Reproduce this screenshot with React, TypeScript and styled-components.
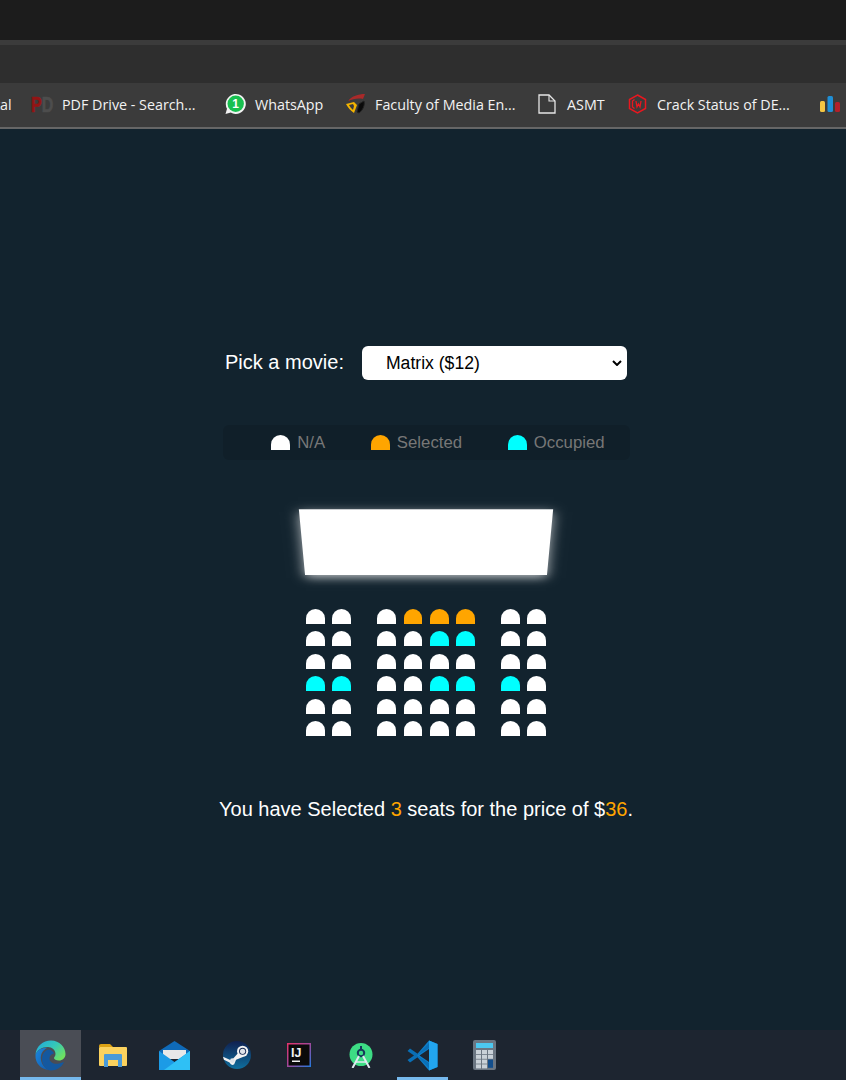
import React from "react";
import styled, { createGlobalStyle } from "styled-components";

const Global = createGlobalStyle`
  html, body { margin: 0; padding: 0; background: #12232e; }
  * { box-sizing: border-box; }
`;

const Page = styled.div`
  width: 846px;
  height: 1080px;
  display: flex;
  flex-direction: column;
  overflow: hidden;
  background: #12232e;
  font-family: "Liberation Sans", Arial, sans-serif;
  color: #fff;
`;

const TitleBar = styled.div`
  height: 40px;
  background: #1c1c1c;
`;

const TabEdge = styled.div`
  height: 5px;
  background: #3b3b3b;
`;

const AddressBar = styled.div`
  height: 38px;
  background: #2e2e2e;
`;

const BookmarkBar = styled.div`
  height: 46px;
  display: flex;
  align-items: center;
  padding-bottom: 2px;
  overflow: hidden;
  background: #3b3b3b;
  border-bottom: 2px solid #666;
  font-family: "Open Sans", sans-serif;
  font-size: 14.3px;
  color: #f2f2f2;
`;

const Bookmark = styled.div<{ $width: number }>`
  flex: none;
  width: ${(p) => p.$width}px;
  display: flex;
  align-items: center;
  white-space: nowrap;
`;

const CutOffLabel = styled.span`
  margin-left: -5px;
`;

const IconSlot = styled.span<{ $width: number }>`
  flex: none;
  width: ${(p) => p.$width}px;
  display: flex;
  align-items: center;
`;

const Main = styled.main`
  flex: 1;
  display: flex;
  flex-direction: column;
  align-items: center;
  justify-content: center;
  padding: 8px 0 0 6px;
  font-size: 20px;
`;

const MoviePicker = styled.div`
  display: flex;
  align-items: center;
  gap: 18px;
`;

const MovieLabel = styled.label`
  padding-bottom: 2px;
  font-size: 20px;
`;

const chevron =
  "data:image/svg+xml," +
  encodeURIComponent(
    '<svg xmlns="http://www.w3.org/2000/svg" width="10" height="6" viewBox="0 0 10 6"><path d="M1 1l4 4 4-4" fill="none" stroke="#000" stroke-width="2"/></svg>'
  );

const MovieSelect = styled.select`
  appearance: none;
  width: 265px;
  height: 34px;
  border: 0;
  border-radius: 6px;
  padding-left: 24px;
  background: #fff url("${chevron}") no-repeat right 5px center;
  color: #000;
  font-family: "Liberation Sans", Arial, sans-serif;
  font-size: 17.6px;
`;

const Legend = styled.ul`
  width: 407px;
  height: 35px;
  margin: 45px 0 0;
  padding: 0 0 0 24px;
  list-style: none;
  display: flex;
  align-items: center;
  justify-content: center;
  gap: 46px;
  border-radius: 6px;
  background: rgba(0, 0, 0, 0.1);
  color: #777;
  font-size: 16.75px;
`;

const LegendItem = styled.li`
  display: flex;
  align-items: center;
  gap: 7px;
`;

const Seat = styled.div<{ $status: string }>`
  width: 18.75px;
  height: 15px;
  border-radius: 12.5px 12.5px 0 0;
  background: ${(p) =>
    p.$status === "s" ? "#ffa500" : p.$status === "o" ? "#00ffff" : "#fff"};
`;

const Hall = styled.div`
  width: 247.5px;
  margin-top: 20px;
  perspective: 1250px;
`;

const Screen = styled.div`
  width: 100%;
  height: 87.5px;
  margin: 18.75px 0;
  background: #fff;
  transform: rotateX(-45deg);
  box-shadow: 0 3.75px 12.5px rgba(255, 255, 255, 0.7);
`;

const SeatRow = styled.div`
  display: flex;
  & > div {
    margin: 3.75px;
  }
  & > div:nth-of-type(2) {
    margin-right: 22.5px;
  }
  & > div:nth-last-of-type(2) {
    margin-left: 22.5px;
  }
`;

const Summary = styled.p`
  margin: 58px 0 0;
  font-size: 20px;
  line-height: 23px;
`;

const Amount = styled.span`
  color: #ffa500;
`;

const Taskbar = styled.div`
  height: 50px;
  display: flex;
  padding-left: 20px;
  background: #1d2530;
`;

const TaskCell = styled.div<{ $active?: boolean; $open?: boolean }>`
  position: relative;
  width: 61px;
  margin-right: 1px;
  display: flex;
  align-items: center;
  justify-content: center;
  background: ${(p) => (p.$active ? "#4a4d55" : "transparent")};
  &::after {
    content: "";
    display: ${(p) => (p.$active || p.$open ? "block" : "none")};
    position: absolute;
    left: ${(p) => (p.$active ? 0 : 5)}px;
    right: ${(p) => (p.$active ? 0 : 5)}px;
    bottom: 0;
    height: 3px;
    background: #76b9ed;
  }
`;

const IconText = styled.text`
  font-family: "Liberation Sans", Arial, sans-serif;
  font-weight: 700;
`;

const PdfIcon = () => (
  <svg width="22" height="20" viewBox="0 0 22 20" overflow="visible">
    <IconText x="0" y="12.600" fontSize="16" fill="#931414" stroke="#931414" strokeWidth="0.5" transform="scale(1 1.4)">P</IconText>
    <IconText x="10.700" y="12.600" fontSize="16" fill="#4d4d4d" stroke="#4d4d4d" strokeWidth="0.5" transform="scale(1 1.4)">D</IconText>
  </svg>
);

const WhatsAppIcon = () => (
  <svg width="21" height="22" viewBox="0.5 0 21 22">
    <path d="M1 21l1.500-5.300A10 10 0 1 1 6.300 19.600z" fill="#f2f2f2" />
    <circle cx="11.200" cy="10.800" r="8.200" fill="#17c04f" />
    <IconText x="11.200" y="15" fontSize="12" fill="#fff" textAnchor="middle">1</IconText>
  </svg>
);

const FacultyIcon = () => (
  <svg width="21" height="22" viewBox="0 0 21 22">
    <path d="M3 8C7 3 13 1 20 1l-2 5C13 5 8 6 3 8z" fill="#a82a2a" />
    <path d="M1 11l8-2 3 3-3 8C6 18 3 15 1 11zm3 1c1 2 3 4 4 5l1-4-1-2z" fill="#f4b400" />
    <path d="M12 19l2-8 5-3c1 4-1 9-5 12z" fill="#0a0a0a" stroke="#222" />
  </svg>
);

const DocIcon = () => (
  <svg width="18" height="20" viewBox="0 0 18 20" fill="none">
    <path d="M1 1h10l6 6v12H1z" stroke="#e6e6e6" strokeWidth="1.300" />
    <path d="M11 1v6h6" stroke="#e6e6e6" strokeWidth="1.100" />
  </svg>
);

const CrackIcon = () => (
  <svg width="19" height="20" viewBox="0 0 19 20" fill="none">
    <path d="M9.500 1l8 4.500v9l-8 4.500-8-4.500v-9z" stroke="#e8171f" strokeWidth="1.500" />
    <path d="M6.500 5.500L4.500 7v6l2 1.500M8 7l1 6 1.500-3 1.500 3 1-6" stroke="#e8171f" strokeWidth="1.300" />
  </svg>
);

const BarsIcon = () => (
  <svg width="20" height="16" viewBox="0 0 20 16">
    <rect x="0" y="5" width="5" height="11" rx="1.500" fill="#f4c542" />
    <rect x="7.500" y="0" width="5.500" height="16" rx="1.500" fill="#1f8fd6" />
    <rect x="15" y="6" width="5" height="10" rx="1.500" fill="#b3202a" />
  </svg>
);

const EdgeIcon = () => (
  <svg width="31" height="31" viewBox="0 0 31 31">
    <defs>
      <linearGradient id="edgeTop" x1="0" y1="0" x2="1" y2="0.7">
        <stop offset="0" stopColor="#1fa6e0" />
        <stop offset="0.55" stopColor="#35c8b8" />
        <stop offset="1" stopColor="#6fe05f" />
      </linearGradient>
      <linearGradient id="edgeLow" x1="0" y1="0" x2="1" y2="1">
        <stop offset="0" stopColor="#1c86dc" />
        <stop offset="1" stopColor="#0f5cb0" />
      </linearGradient>
    </defs>
    <path d="M0.500 15C1 6 8 0.500 16 0.500 24.500 0.500 30.500 7 30.500 14c0 4-3 6.500-6.500 6.500-3 0-5-1-5-2.500 0-1 1.500-1.500 1.500-4C20.500 10 17 7 13 7 6.500 7 2 10 0.500 15z" fill="url(#edgeTop)" />
    <path d="M0.500 15C2 10 6.500 7.500 12 8c-4 2-7 6-6 12 .6 4 3.500 8 8 10C6 29.500 0 23 0.500 15z" fill="url(#edgeLow)" />
    <path d="M7 19c0-5 3-8.500 6-9.500 3 0 5.500 2 6 4-2 .5-4.500 2-4.500 5 0 4 4.500 6 9.500 5l5-1.500C26.500 27.500 21.500 30.500 16 30.500 11 30.500 7 25 7 19z" fill="#14589f" />
  </svg>
);

const FolderIcon = () => (
  <svg width="28" height="23" viewBox="0 0 28 23">
    <path d="M0 2q0-2 2-2h9l3 3H0z" fill="#dca214" />
    <rect x="0" y="3" width="28" height="19" rx="1" fill="#fbd25e" />
    <path d="M5 23V11q0-1 1-1h16q1 0 1 1v12h-4v-7H9v7H5z" fill="#4a9ad8" />
  </svg>
);

const MailIcon = () => (
  <svg width="31" height="29" viewBox="0 0 31 29">
    <path d="M0 10L15.500 0 31 10v3H0z" fill="#0f6ab8" />
    <path d="M4 9h23v9H4z" fill="#e8e8e8" />
    <path d="M0 10l15.500 11L31 10v19H0z" fill="#1c9be6" />
    <path d="M31 10v19H5z" fill="#2fc0f5" />
  </svg>
);

const SteamIcon = () => (
  <svg width="28" height="28" viewBox="0 0 30 30">
    <defs>
      <linearGradient id="steamBg" x1="0" y1="0" x2="0" y2="1">
        <stop offset="0" stopColor="#10204f" />
        <stop offset="1" stopColor="#0f6f9e" />
      </linearGradient>
    </defs>
    <circle cx="15" cy="15" r="15" fill="url(#steamBg)" />
    <path d="M0 17l9 4 8-9 5-3v8l-8 3-2 5q-3 2-5-2L1 20z" fill="#f2f2f2" />
    <circle cx="21" cy="11" r="6" fill="#f2f2f2" />
    <circle cx="21" cy="11" r="3.800" fill="#14264f" />
    <circle cx="21" cy="11" r="2.800" fill="#dfe3e8" />
    <circle cx="10" cy="21" r="2.500" fill="#dfe3e8" />
  </svg>
);

const IdeaIcon = () => (
  <svg width="24" height="24" viewBox="0 0 24 24">
    <defs>
      <linearGradient id="ideaFrame" x1="0" y1="0" x2="1" y2="1">
        <stop offset="0" stopColor="#e8336b" />
        <stop offset="0.5" stopColor="#a0489a" />
        <stop offset="1" stopColor="#1f7be0" />
      </linearGradient>
    </defs>
    <rect width="24" height="24" fill="url(#ideaFrame)" />
    <rect x="1.500" y="1.500" width="21" height="21" fill="#0b0b0b" />
    <IconText x="4" y="13.500" fontSize="12.500" fill="#f2f2f2">IJ</IconText>
    <rect x="5" y="17.500" width="8" height="1.500" fill="#f2f2f2" />
  </svg>
);

const AndroidStudioIcon = () => (
  <svg width="24" height="25" viewBox="0 0 24 25" fill="none">
    <circle cx="12" cy="11.500" r="11.500" fill="#3ddc84" />
    <circle cx="12" cy="10" r="3.200" stroke="#16395a" strokeWidth="2" />
    <path d="M12 3v4" stroke="#16395a" strokeWidth="2" />
    <path d="M10 13L3.500 25M14 13l6.500 12" stroke="#dfe8ef" strokeWidth="2" />
    <path d="M6 19h12" stroke="#dfe8ef" strokeWidth="1.500" />
  </svg>
);

const VSCodeIcon = () => (
  <svg width="31" height="31" viewBox="0 0 31 31">
    <path d="M22 0.500L9 15.500l13 15 8.500-3.500V4z" fill="#0e7fcb" />
    <path d="M22 0.500L30.500 4v23L22 30.500z" fill="#22a5ef" />
    <path d="M22 9v13L12.500 15.500z" fill="#1d2530" />
    <path d="M3 8.500L0.500 11 7 15.500 0.500 20 3 22.500l8-5.500 11 11v-5L10 15.500 22 8V3L11 14z" fill="#0a6fb6" />
  </svg>
);

const CalcIcon = () => (
  <svg width="23" height="30" viewBox="0 0 23 30">
    <rect width="23" height="30" rx="2" fill="#6b7682" />
    <rect x="3" y="3" width="17" height="5" fill="#4cc8f0" />
    {[0, 1, 2].map((c) =>
      [0, 1, 2, 3].map((r) =>
        c === 2 && r >= 2 ? null : (
          <rect key={`${c}-${r}`} x={3 + c * 6} y={10 + r * 4.8} width="5" height="4" fill="#c9d1d8" />
        )
      )
    )}
    <rect x="15" y="19.600" width="5" height="8.200" fill="#124e8c" />
  </svg>
);

const rows = [
  "nnnsssnn",
  "nnnnoonn",
  "nnnnnnnn",
  "oonnooon",
  "nnnnnnnn",
  "nnnnnnnn",
];

export default function App() {
  return (
    <Page>
      <Global />
      <TitleBar />
      <TabEdge />
      <AddressBar />
      <BookmarkBar>
        <Bookmark $width={31}><CutOffLabel>tal</CutOffLabel></Bookmark>
        <Bookmark $width={194}>
          <IconSlot $width={31}><PdfIcon /></IconSlot>
          PDF Drive - Search...
        </Bookmark>
        <Bookmark $width={120}>
          <IconSlot $width={30}><WhatsAppIcon /></IconSlot>
          WhatsApp
        </Bookmark>
        <Bookmark $width={193}>
          <IconSlot $width={30}><FacultyIcon /></IconSlot>
          Faculty of Media En...
        </Bookmark>
        <Bookmark $width={90}>
          <IconSlot $width={29}><DocIcon /></IconSlot>
          ASMT
        </Bookmark>
        <Bookmark $width={192}>
          <IconSlot $width={29}><CrackIcon /></IconSlot>
          Crack Status of DE...
        </Bookmark>
        <Bookmark $width={26}>
          <BarsIcon />
        </Bookmark>
      </BookmarkBar>
      <Main>
        <MoviePicker>
          <MovieLabel>Pick a movie:</MovieLabel>
          <MovieSelect defaultValue="12">
            <option value="12">Matrix ($12)</option>
            <option value="10">Inception ($10)</option>
            <option value="8">Interstellar ($8)</option>
          </MovieSelect>
        </MoviePicker>
        <Legend>
          <LegendItem><Seat $status="n" />N/A</LegendItem>
          <LegendItem><Seat $status="s" />Selected</LegendItem>
          <LegendItem><Seat $status="o" />Occupied</LegendItem>
        </Legend>
        <Hall>
          <Screen />
          {rows.map((row, i) => (
            <SeatRow key={i}>
              {row.split("").map((s, j) => (
                <Seat key={j} $status={s} />
              ))}
            </SeatRow>
          ))}
        </Hall>
        <Summary>
          You have Selected <Amount>3</Amount> seats for the price of $<Amount>36</Amount>.
        </Summary>
      </Main>
      <Taskbar>
        <TaskCell $active><EdgeIcon /></TaskCell>
        <TaskCell><FolderIcon /></TaskCell>
        <TaskCell><MailIcon /></TaskCell>
        <TaskCell><SteamIcon /></TaskCell>
        <TaskCell><IdeaIcon /></TaskCell>
        <TaskCell><AndroidStudioIcon /></TaskCell>
        <TaskCell $open><VSCodeIcon /></TaskCell>
        <TaskCell><CalcIcon /></TaskCell>
      </Taskbar>
    </Page>
  );
}
